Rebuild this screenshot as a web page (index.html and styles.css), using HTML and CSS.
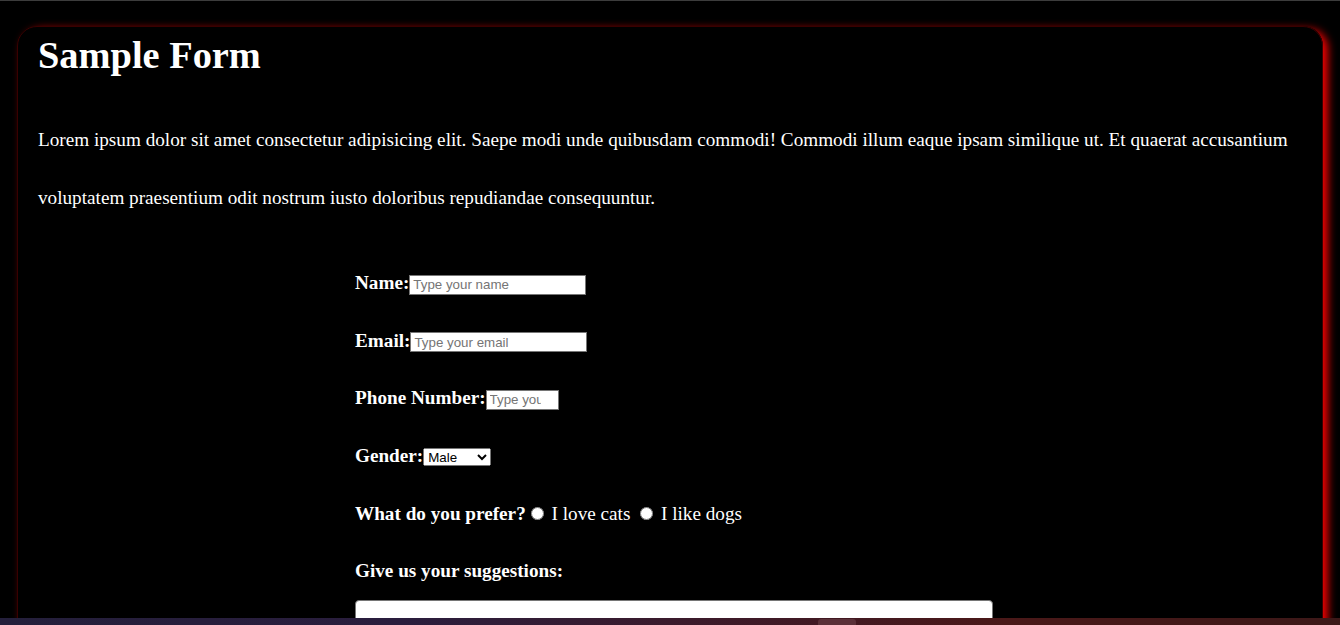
FILE: index.html
```html
<!DOCTYPE html>
<html lang="en">
<head>
<meta charset="utf-8">
<title>Sample Form</title>
<link rel="stylesheet" href="styles.css">
</head>
<body>
<div class="card">
  <h1 class="title">Sample Form</h1>
  <p class="intro">Lorem ipsum dolor sit amet consectetur adipisicing elit. Saepe modi unde quibusdam commodi! Commodi illum eaque ipsam similique ut. Et quaerat accusantium voluptatem praesentium odit nostrum iusto doloribus repudiandae consequuntur.</p>
  <form class="form">
    <div class="row"><label class="lbl" for="name">Name:</label><input class="field field-wide" id="name" type="text" placeholder="Type your name"></div>
    <div class="row"><label class="lbl" for="email">Email:</label><input class="field field-wide" id="email" type="email" placeholder="Type your email"></div>
    <div class="row"><label class="lbl" for="phone">Phone Number:</label><input class="field field-short" id="phone" type="tel" placeholder="Type your phone number"></div>
    <div class="row"><label class="lbl" for="gender">Gender:</label><select class="choice" id="gender"><option>Male</option><option>Female</option><option>Other</option></select></div>
    <div class="row"><span class="lbl">What do you prefer?</span><input class="radio" type="radio" name="pref" id="cats"> <label for="cats">I love cats</label> <input class="radio" type="radio" name="pref" id="dogs"> <label for="dogs">I like dogs</label></div>
    <div class="row"><label class="lbl" for="sugg">Give us your suggestions:</label></div>
    <textarea class="notes" id="sugg" rows="6"></textarea>
  </form>
</div>
<div class="taskbar"><span class="taskbar-btn"></span></div>
</body>
</html>
```

FILE: styles.css
```css
html, body {
  background: #000;
}
body {
  margin: 0;
  border-top: 1px solid #3c3c3c;
  padding: 25px 17px 40px 17px;
  color: #fff;
  font-family: "Liberation Serif", "Times New Roman", serif;
  font-size: 19.2px;
}
.card {
  border: 1px solid #3a0000;
  border-radius: 20px;
  padding: 6px 20px 40px 20px;
  box-shadow: 5px 3px 8px #f00000;
}
.title {
  margin: 0;
  font-size: 38.4px;
  font-weight: bold;
  line-height: normal;
}
.intro {
  margin: 34px 0 0 0;
  line-height: 57.6px;
}
.form {
  width: 632px;
  margin: 28px 0 0 317px;
}
.row {
  line-height: 57.6px;
  white-space: nowrap;
}
.lbl {
  font-weight: bold;
}
.field {
  box-sizing: border-box;
  height: 20px;
  border: 1px solid #767676;
  padding: 1px 3px;
  font-family: "Liberation Sans", Arial, sans-serif;
  font-size: 13.333px;
  color: #000;
  background: #fff;
  vertical-align: baseline;
}
.field::placeholder {
  color: #757575;
}
.field-wide {
  width: 177px;
}
.field-short {
  width: 73px;
  padding-right: 17px;
}
.choice {
  width: 68px;
  height: 18px;
  font-family: "Liberation Sans", Arial, sans-serif;
  font-size: 13.333px;
}
.radio {
  margin: 3px 3px 0 5px;
}
.notes {
  display: block;
  width: 100%;
  padding: 2px;
  border: 1px solid #767676;
  border-radius: 4px;
  font-family: "Liberation Mono", monospace;
  font-size: 13.333px;
}
.taskbar {
  position: fixed;
  left: 0;
  right: 0;
  bottom: 0;
  height: 7px;
  background: linear-gradient(90deg, #241f3b 0%, #2a1d3d 30%, #3a1a2c 50%, #4a1818 75%, #3c1818 100%);
}
.taskbar-btn {
  position: absolute;
  left: 818px;
  top: 1px;
  width: 38px;
  height: 6px;
  border-radius: 3px 3px 0 0;
  background: #5a3038;
}
```
